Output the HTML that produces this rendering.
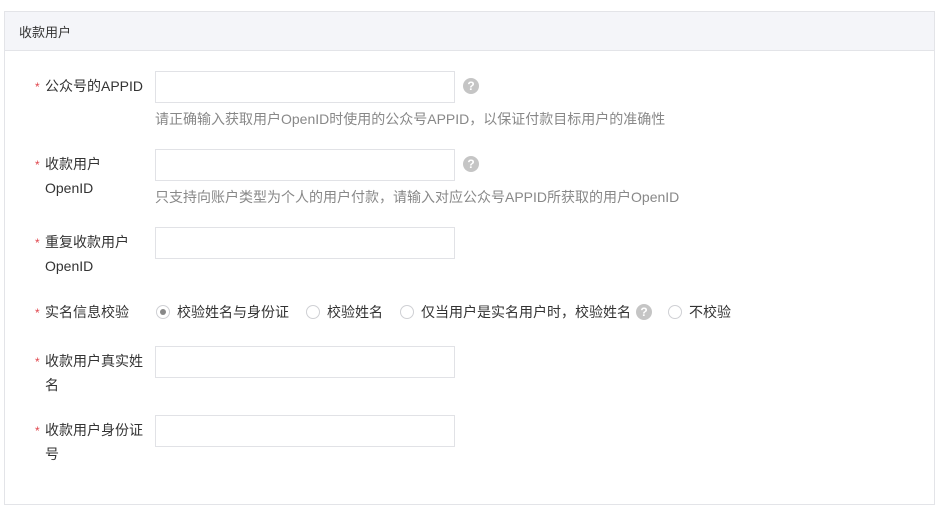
<!DOCTYPE html>
<html><head><meta charset="utf-8"><style>
body{margin:0;width:949px;height:517px;background:#fff;font-family:"Liberation Sans","Noto Sans CJK SC",sans-serif;font-size:14px;color:#333;position:relative;overflow:hidden}
.panel{position:absolute;left:4px;top:11px;width:929px;height:492px;border:1px solid #e3e4e8}
.hd{position:absolute;left:0;top:0;width:929px;height:38px;background:#f4f5f9;border-bottom:1px solid #e3e4e8}
.hd span{position:absolute;left:14px;top:10px;font-size:13px}
.a{position:absolute}
.lab{position:absolute;left:45px;line-height:24px;width:105px}
.star{position:absolute;left:35px;color:#e0464d;font-size:12px}
.inp{position:absolute;left:155px;width:298px;height:30px;border:1px solid #e1e2e6;background:#fff}
.q{position:absolute;width:16px;height:16px;border-radius:50%;background:#c5c5c5;color:#fff;font-size:12px;font-weight:bold;text-align:center;line-height:16px}
.help{position:absolute;left:155px;color:#888;font-size:14px}
.r{position:absolute;width:12px;height:12px;border:1px solid #cfd0d4;border-radius:50%;top:305px}
.r.on::after{content:"";position:absolute;left:3px;top:3px;width:6px;height:6px;border-radius:50%;background:#888}
.rt{position:absolute;top:302px}
</style></head><body>
<div class="panel"><div class="hd"><span>收款用户</span></div></div>

<span class="star" style="top:80px">*</span><div class="lab" style="top:74px">公众号的APPID</div>
<div class="inp" style="top:71px"></div><div class="q" style="left:463px;top:78px">?</div>
<div class="help" style="top:109px">请正确输入获取用户OpenID时使用的公众号APPID，以保证付款目标用户的准确性</div>

<span class="star" style="top:158px">*</span><div class="lab" style="top:152px">收款用户<br>OpenID</div>
<div class="inp" style="top:149px"></div><div class="q" style="left:463px;top:156px">?</div>
<div class="help" style="top:187px">只支持向账户类型为个人的用户付款，请输入对应公众号APPID所获取的用户OpenID</div>

<span class="star" style="top:236px">*</span><div class="lab" style="top:230px">重复收款用户<br>OpenID</div>
<div class="inp" style="top:227px"></div>

<span class="star" style="top:306px">*</span><div class="lab" style="top:300px">实名信息校验</div>
<div class="r on" style="left:156px"></div><span class="rt" style="left:177px">校验姓名与身份证</span>
<div class="r" style="left:306px"></div><span class="rt" style="left:327px">校验姓名</span>
<div class="r" style="left:400px"></div><span class="rt" style="left:421px">仅当用户是实名用户时，校验姓名</span>
<div class="q" style="left:636px;top:304px">?</div>
<div class="r" style="left:668px"></div><span class="rt" style="left:689px">不校验</span>

<span class="star" style="top:355px">*</span><div class="lab" style="top:349px">收款用户真实姓<br>名</div>
<div class="inp" style="top:346px"></div>

<span class="star" style="top:424px">*</span><div class="lab" style="top:418px">收款用户身份证<br>号</div>
<div class="inp" style="top:415px"></div>
</body></html>
